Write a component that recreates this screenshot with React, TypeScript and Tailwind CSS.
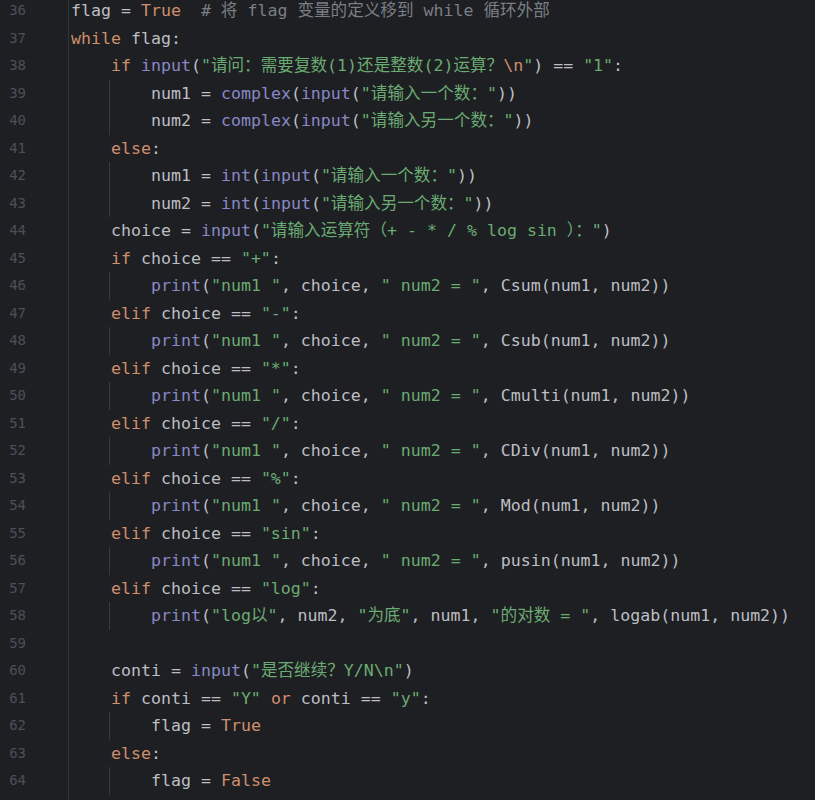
import React from 'react'

const K = 'text-[#cf8e6d]'
const B = 'text-[#8888c6]'
const S = 'text-[#6aab73]'
const C = 'text-[#7a7e85]'
const D = ''

type Seg = [string, string]
type Line = { n: number; indent: number; segs: Seg[] }

const elif = (n: number, op: string): Line => ({
  n,
  indent: 4,
  segs: [[K, 'elif'], [D, ' choice == '], [S, `"${op}"`], [D, ':']],
})

const pr = (n: number, fn: string): Line => ({
  n,
  indent: 8,
  segs: [
    [B, 'print'],
    [D, '('],
    [S, '"num1 "'],
    [D, ', choice, '],
    [S, '" num2 = "'],
    [D, `, ${fn}(num1, num2))`],
  ],
})

const lines: Line[] = [
  { n: 36, indent: 0, segs: [[D, 'flag = '], [K, 'True'], [C, '  # 将 flag 变量的定义移到 while 循环外部']] },
  { n: 37, indent: 0, segs: [[K, 'while'], [D, ' flag:']] },
  {
    n: 38,
    indent: 4,
    segs: [
      [K, 'if'],
      [D, ' '],
      [B, 'input'],
      [D, '('],
      [S, '"请问：需要复数(1)还是整数(2)运算？'],
      [K, '\\n'],
      [S, '"'],
      [D, ') == '],
      [S, '"1"'],
      [D, ':'],
    ],
  },
  { n: 39, indent: 8, segs: [[D, 'num1 = '], [B, 'complex'], [D, '('], [B, 'input'], [D, '('], [S, '"请输入一个数："'], [D, '))']] },
  { n: 40, indent: 8, segs: [[D, 'num2 = '], [B, 'complex'], [D, '('], [B, 'input'], [D, '('], [S, '"请输入另一个数："'], [D, '))']] },
  { n: 41, indent: 4, segs: [[K, 'else'], [D, ':']] },
  { n: 42, indent: 8, segs: [[D, 'num1 = '], [B, 'int'], [D, '('], [B, 'input'], [D, '('], [S, '"请输入一个数："'], [D, '))']] },
  { n: 43, indent: 8, segs: [[D, 'num2 = '], [B, 'int'], [D, '('], [B, 'input'], [D, '('], [S, '"请输入另一个数："'], [D, '))']] },
  { n: 44, indent: 4, segs: [[D, 'choice = '], [B, 'input'], [D, '('], [S, '"请输入运算符（+ - * / % log sin ）："'], [D, ')']] },
  { n: 45, indent: 4, segs: [[K, 'if'], [D, ' choice == '], [S, '"+"'], [D, ':']] },
  pr(46, 'Csum'),
  elif(47, '-'),
  pr(48, 'Csub'),
  elif(49, '*'),
  pr(50, 'Cmulti'),
  elif(51, '/'),
  pr(52, 'CDiv'),
  elif(53, '%'),
  pr(54, 'Mod'),
  elif(55, 'sin'),
  pr(56, 'pusin'),
  elif(57, 'log'),
  {
    n: 58,
    indent: 8,
    segs: [
      [B, 'print'],
      [D, '('],
      [S, '"log以"'],
      [D, ', num2, '],
      [S, '"为底"'],
      [D, ', num1, '],
      [S, '"的对数 = "'],
      [D, ', logab(num1, num2))'],
    ],
  },
  { n: 59, indent: 0, segs: [] },
  { n: 60, indent: 4, segs: [[D, 'conti = '], [B, 'input'], [D, '('], [S, '"是否继续？Y/N\\n"'], [D, ')']] },
  {
    n: 61,
    indent: 4,
    segs: [[K, 'if'], [D, ' conti == '], [S, '"Y"'], [D, ' '], [K, 'or'], [D, ' conti == '], [S, '"y"'], [D, ':']],
  },
  { n: 62, indent: 8, segs: [[D, 'flag = '], [K, 'True']] },
  { n: 63, indent: 4, segs: [[K, 'else'], [D, ':']] },
  { n: 64, indent: 8, segs: [[D, 'flag = '], [K, 'False']] },
]

const mono = "font-['DejaVu_Sans_Mono','Noto_Sans_CJK_SC',monospace]"

const App = () => {
  return (
    <div className={`flex h-[800px] w-full overflow-hidden bg-[#1e1f22] text-[#bcbec4] ${mono}`}>
      {/* Gutter */}
      <div className="w-[69px] shrink-0 border-r border-[#313337]">
        <div className="-mt-[3px] flex w-[26px] flex-col items-end">
          {lines.map((l) => (
            <div key={l.n} className="h-[27.5px] text-[14px] leading-[27.5px] text-[#4b5059]">
              {l.n}
            </div>
          ))}
        </div>
      </div>

      {/* Code */}
      <div className="flex-1 pl-[2px]">
        <div className="-mt-[3px] flex flex-col">
          {lines.map((l) => (
            <div key={l.n} className="flex h-[27.5px]">
              {l.indent === 8 ? (
                <>
                  <span className="w-[38px] shrink-0" />
                  <span className="w-px shrink-0 bg-[#393b40]" />
                  <span className="w-[41px] shrink-0" />
                </>
              ) : l.indent === 4 ? (
                <span className="w-[40px] shrink-0" />
              ) : null}
              <span className="self-center whitespace-pre text-[16.6px] leading-[27.5px]">
                {l.segs.map(([cls, t], i) => (
                  <span key={i} className={cls}>
                    {t}
                  </span>
                ))}
              </span>
            </div>
          ))}
        </div>
      </div>
    </div>
  )
}

export default App
